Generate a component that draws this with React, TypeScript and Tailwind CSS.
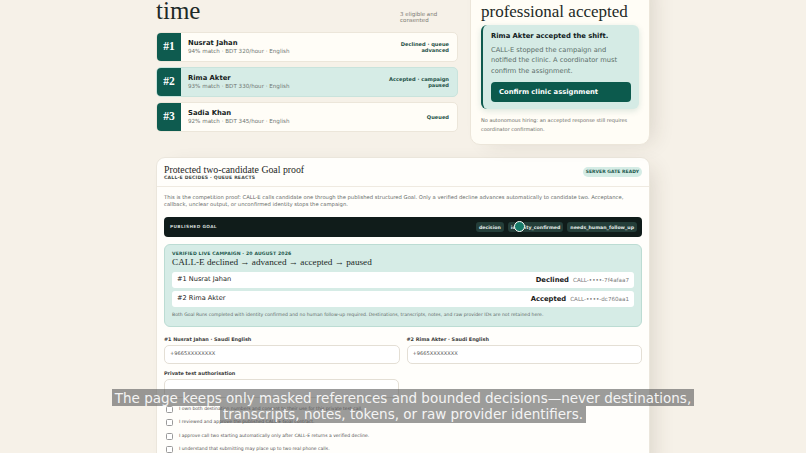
import React from "react";

const rows = [
  { n: "#1", name: "Nusrat Jahan", sub: "94% match · BDT 320/hour · English", status: "Declined · queue advanced", active: false },
  { n: "#2", name: "Rima Akter", sub: "93% match · BDT 330/hour · English", status: "Accepted · campaign paused", active: true },
  { n: "#3", name: "Sadia Khan", sub: "92% match · BDT 345/hour · English", status: "Queued", active: false },
];

const checks = [
  "I own both destination numbers and consent to their use for this private test call.",
  "I reviewed and approve the published CALL-E Goal contract.",
  "I approve call two starting automatically only after CALL-E returns a verified decline.",
  "I understand that submitting may place up to two real phone calls.",
];

function Chip({ children }: { children: React.ReactNode }) {
  return (
    <span className="flex h-[9.5px] items-center rounded-[3px] bg-[#243e39] px-[3px] text-[4.7px] font-bold text-[#e2ebe8]">
      {children}
    </span>
  );
}

export default function App() {
  return (
    <div className="relative h-[453px] overflow-hidden bg-[#f6f1e8] font-['DejaVu_Sans',sans-serif] text-[#1c1c1c]">
      <div className="mx-auto -mt-[28px] w-[494px]">
        <div className="grid grid-cols-[302px_180px] items-start gap-x-[12px]">
          <section>
            <div className="flex items-end justify-between">
              <h1 className="whitespace-nowrap font-['Liberation_Serif',serif] text-[25px] leading-[26px] text-[#1d2a27]">
                One call at a
                <br />
                time
              </h1>
              <p className="mb-[1px] w-[58px] text-[5.5px] leading-[6px] text-[#7a7a72]">3 eligible and consented</p>
            </div>
            <div className="mt-[8px] flex flex-col gap-[5px]">
              {rows.map((r) => (
                <div
                  key={r.n}
                  className={
                    r.active
                      ? "flex h-[30px] overflow-hidden rounded-[5px] border border-[#c9e3dc] bg-[#d6ece6]"
                      : "flex h-[30px] overflow-hidden rounded-[5px] border border-[#ece6da] bg-[#fffdf7]"
                  }
                >
                  <div className="flex w-[24px] shrink-0 items-center justify-center bg-[#0e5b4f] font-['Liberation_Serif',serif] text-[11.5px] font-bold text-white">
                    {r.n}
                  </div>
                  <div className="flex flex-1 items-center justify-between pl-[7px] pr-[8px]">
                    <div>
                      <div className="text-[6.8px] font-bold leading-[8.5px] text-[#161c1b]">{r.name}</div>
                      <div className="mt-[1px] text-[5.6px] leading-[7px] text-[#6f7672]">{r.sub}</div>
                    </div>
                    <div className="w-[66px] text-right text-[5.1px] font-bold leading-[6px] text-[#1c4f45]">{r.status}</div>
                  </div>
                </div>
              ))}
            </div>
          </section>

          <aside className="rounded-[10px] border border-[#ece6da] bg-[#fffdf6] px-[10px] pt-[10px] pb-[10px] shadow-[10px_4px_22px_-8px_rgba(60,50,30,0.16)]">
            <h2 className="font-['Liberation_Serif',serif] text-[17px] leading-[19px] text-[#1d2a27]">
              Clinic notified: a
              <br />
              professional accepted
            </h2>
            <div className="mt-[4px] rounded-[6px] border-l-2 border-[#0e5b4f] bg-[#d5ebe5] pl-[8px] pr-[8px] pt-[6px] pb-[7px] shadow-[0_2px_6px_rgba(15,90,78,0.14)]">
              <div className="text-[6.8px] font-bold leading-[10px] text-[#10201c]">Rima Akter accepted the shift.</div>
              <p className="mt-[4px] text-[6.7px] leading-[10.3px] text-[#5b6e69]">
                CALL-E stopped the campaign and notified the clinic. A coordinator must confirm the assignment.
              </p>
              <button className="mt-[6px] flex h-[20px] w-full items-center rounded-[4px] bg-[#0c5a4d] px-[8px] text-[6.8px] font-bold text-white">
                Confirm clinic assignment
              </button>
            </div>
            <p className="mt-[7px] text-[5px] leading-[9px] text-[#6b6b66]">
              No autonomous hiring: an accepted response still requires coordinator confirmation.
            </p>
          </aside>
        </div>

        <main className="mt-[12px] rounded-[9px] border border-[#ebe6dc] bg-[#fffefb] shadow-[10px_4px_22px_-8px_rgba(60,50,30,0.16)]">
          <header className="flex items-center justify-between border-b border-[#efeae1] px-[7px] pt-[6px] pb-[5px]">
            <div>
              <h2 className="font-['Liberation_Serif',serif] text-[9.8px] leading-[11px] text-[#1d2523]">
                Protected two-candidate Goal proof
              </h2>
              <p className="text-[4.6px] font-bold leading-[6px] tracking-[0.04em] text-[#3f4a47]">CALL-E DECIDES · QUEUE REACTS</p>
            </div>
            <span className="rounded-full bg-[#d5ece5] px-[3px] py-[2px] text-[4.5px] font-bold leading-[6px] tracking-[0.01em] text-[#1f5a4e]">
              SERVER GATE READY
            </span>
          </header>

          <div className="px-[7px] pt-[7px] pb-[20px]">
            <p className="text-[5.25px] leading-[7.6px] text-[#676b69]">
              This is the competition proof: CALL-E calls candidate one through the published structured Goal. Only a verified
              decline advances automatically to candidate two. Acceptance, callback, unclear output, or unconfirmed identity stops
              the campaign.
            </p>

            <div className="mt-[8px] flex h-[20px] items-center justify-between rounded-[4px] bg-[#101c1a] pl-[6px] pr-[5px]">
              <span className="text-[4.3px] font-bold tracking-[0.08em] text-[#c9d3d0]">PUBLISHED GOAL</span>
              <div className="flex items-center gap-[4px]">
                <Chip>decision</Chip>
                <Chip>identity_confirmed</Chip>
                <Chip>needs_human_follow_up</Chip>
              </div>
            </div>

            <div className="mt-[7px] rounded-[6px] border border-[#bcdcd3] bg-[#d6ece6] px-[7px] pt-[6px] pb-[8px]">
              <div className="text-[4.6px] font-bold leading-[6px] tracking-[0.03em] text-[#1e5a4e]">
                VERIFIED LIVE CAMPAIGN · 20 AUGUST 2026
              </div>
              <div className="font-['Liberation_Serif',serif] text-[9.2px] leading-[11px] text-[#1b2a27]">
                CALL-E declined → advanced → accepted → paused
              </div>
              <div className="mt-[4px] flex flex-col gap-[2.7px]">
                <div className="flex h-[16px] items-center justify-between rounded-[3px] bg-white px-[5px]">
                  <span className="text-[6.6px] text-[#222]">#1 Nusrat Jahan</span>
                  <span className="flex items-baseline gap-[4px]">
                    <span className="text-[6.8px] font-bold text-[#1a1a1a]">Declined</span>
                    <span className="text-[5.6px] text-[#7a7a7a]">CALL-••••-7f4afaa7</span>
                  </span>
                </div>
                <div className="flex h-[16px] items-center justify-between rounded-[3px] bg-white px-[5px]">
                  <span className="text-[6.6px] text-[#222]">#2 Rima Akter</span>
                  <span className="flex items-baseline gap-[4px]">
                    <span className="text-[6.8px] font-bold text-[#1a1a1a]">Accepted</span>
                    <span className="text-[5.6px] text-[#7a7a7a]">CALL-••••-dc760aa1</span>
                  </span>
                </div>
              </div>
              <p className="mt-[5px] text-[4.6px] leading-[6px] text-[#5f6b68]">
                Both Goal Runs completed with identity confirmed and no human follow-up required. Destinations, transcripts, notes,
                and raw provider IDs are not retained here.
              </p>
            </div>

            <div className="mt-[9px] grid grid-cols-2 gap-x-[7px]">
              <div>
                <div className="text-[4.9px] font-bold leading-[6px] text-[#3a3a3a]">#1 Nusrat Jahan · Saudi English</div>
                <div className="mt-[3px] flex h-[19px] items-center rounded-[5px] border border-[#e4dfd5] bg-white px-[5px] text-[5.1px] text-[#555]">
                  +9665XXXXXXXX
                </div>
              </div>
              <div>
                <div className="text-[4.9px] font-bold leading-[6px] text-[#3a3a3a]">#2 Rima Akter · Saudi English</div>
                <div className="mt-[3px] flex h-[19px] items-center rounded-[5px] border border-[#e4dfd5] bg-white px-[5px] text-[5.1px] text-[#555]">
                  +9665XXXXXXXX
                </div>
              </div>
            </div>

            <div className="mt-[6px] w-[235px]">
              <div className="text-[4.9px] font-bold leading-[6px] text-[#3a3a3a]">Private test authorisation</div>
              <div className="mt-[3px] h-[19px] rounded-[5px] border border-[#e4dfd5] bg-white" />
            </div>

            <div className="mt-[5px] flex flex-col">
              {checks.map((c) => (
                <label key={c} className="flex h-[13.3px] items-center gap-[6px] pl-[2px]">
                  <span className="h-[7px] w-[7px] shrink-0 rounded-[1.5px] border border-[#9a9a9a] bg-white" />
                  <span className="text-[4.5px] text-[#555]">{c}</span>
                </label>
              ))}
            </div>
          </div>
        </main>
      </div>

      <div className="absolute left-[513.5px] top-[220.5px] h-[11px] w-[11px] rounded-full border-[1.5px] border-white bg-[#167a68] shadow-[0_0_2px_rgba(0,0,0,0.3)]" />

      <div className="pointer-events-none absolute left-0 right-0 top-[389px] flex flex-col items-center">
        <div className="h-[17px] bg-[rgba(90,90,90,0.6)] px-[3px] text-[13.5px] leading-[18px] text-[#f4f4f4]">
          The page keeps only masked references and bounded decisions—never destinations,
        </div>
        <div className="h-[17px] bg-[rgba(90,90,90,0.6)] px-[3px] text-[13.5px] leading-[17px] text-[#f4f4f4]">
          transcripts, notes, tokens, or raw provider identifiers.
        </div>
      </div>
    </div>
  );
}
